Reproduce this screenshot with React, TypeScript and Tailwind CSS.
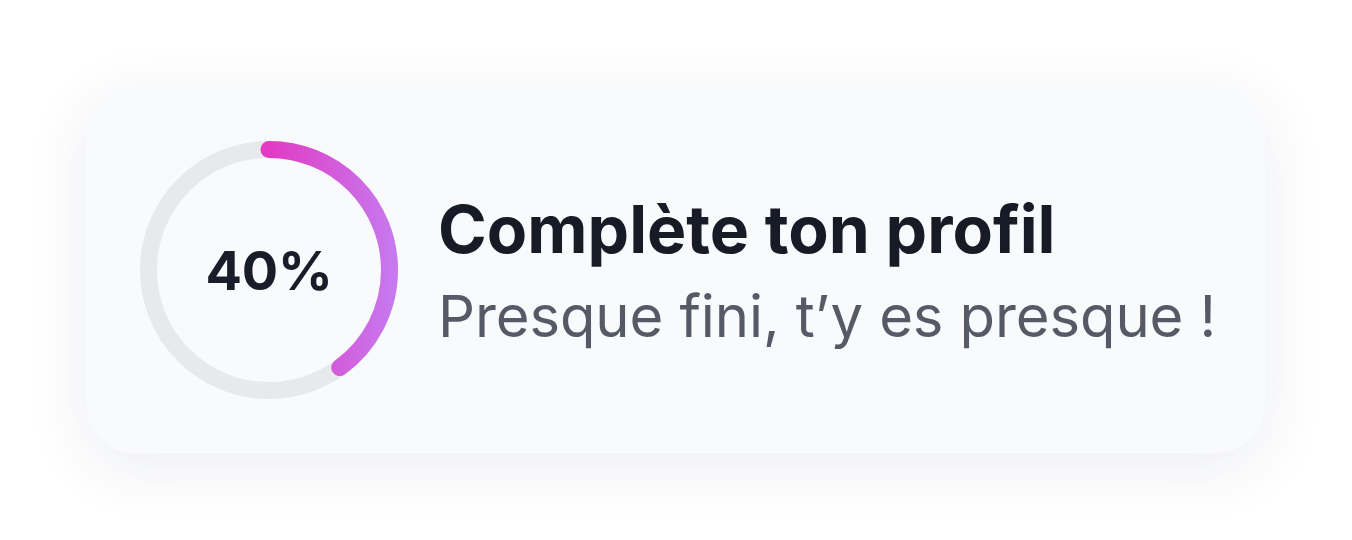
import React from 'react';

const PROGRESS = 40;
const SIZE = 258;
const STROKE = 17;
const R = (SIZE - STROKE) / 2;
const CIRC = 2 * Math.PI * R;

function ProgressRing({ value }: { value: number }) {
  const dash = (value / 100) * CIRC;
  return (
    <div className="relative shrink-0 w-[258px] h-[258px]">
      <svg width={SIZE} height={SIZE} viewBox={`0 0 ${SIZE} ${SIZE}`} className="-rotate-90">
        <defs>
          <linearGradient id="ring" gradientUnits="userSpaceOnUse" x1="129" y1="0" x2="129" y2="258">
            <stop offset="0.5" stopColor="#e13bc4" />
            <stop offset="1" stopColor="#c67bf0" />
          </linearGradient>
        </defs>
        <circle cx={SIZE / 2} cy={SIZE / 2} r={R} fill="none" stroke="#e8e9eb" strokeWidth={STROKE} />
        <circle
          cx={SIZE / 2}
          cy={SIZE / 2}
          r={R}
          fill="none"
          stroke="url(#ring)"
          strokeWidth={STROKE}
          strokeLinecap="round"
          strokeDasharray={`${dash} ${CIRC}`}
        />
      </svg>
      <div className="absolute inset-0 flex items-center justify-center pt-[3px]">
        <span className="text-[54px] leading-none font-bold text-[#181d29] tracking-[-0.3px]">{value}%</span>
      </div>
    </div>
  );
}

export default function App() {
  return (
    <div
      className="min-h-[540px] bg-white p-[86px]"
      style={{ fontFamily: 'Inter, "Noto Sans", sans-serif' }}
    >
      <div className="w-[1179px] h-[367px] rounded-[48px] bg-[#f9fafc] shadow-[0_14px_64px_rgba(40,50,110,0.09)] flex items-center pl-[54px] pr-[40px] gap-[40px]">
        <ProgressRing value={PROGRESS} />
        <div className="flex flex-col gap-[25px] mt-[2px] whitespace-nowrap">
          <h2 className="text-[66px] leading-none font-bold text-[#161b26]">
            Complète ton profil
          </h2>
          <p className="text-[58px] leading-none text-[#555a66] tracking-[-0.1px]">
            Presque fini, t’y es presque !
          </p>
        </div>
      </div>
    </div>
  );
}
